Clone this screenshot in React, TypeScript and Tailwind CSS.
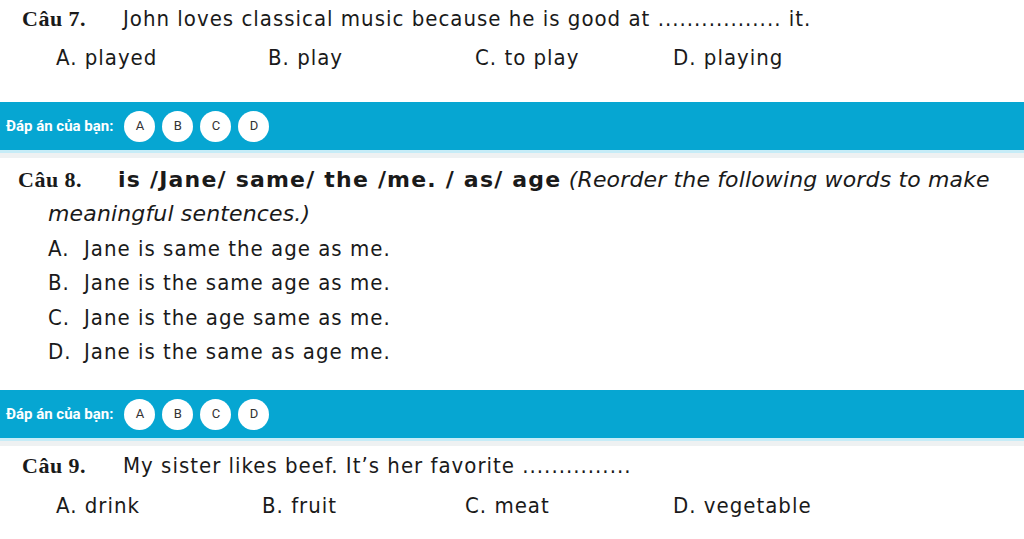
import React from "react";

const body = "font-['DejaVu_Sans_Condensed','DejaVu_Sans',sans-serif] tracking-[1px]";
const serif = "font-['Liberation_Serif',serif] tracking-[0.5px]";

function Bar() {
  return (
    <div>
      <div className="h-[48px] bg-[#06a6d2] flex items-center pl-[6px] gap-[11px] tracking-normal">
        <span className="font-['Roboto',sans-serif] font-bold text-[15px] text-white">
          Đáp án của bạn:
        </span>
        <div className="flex gap-[7px]">
          {["A", "B", "C", "D"].map((l) => (
            <div
              key={l}
              className="w-[31px] h-[31px] rounded-full bg-white flex items-center justify-center font-['Roboto',sans-serif] text-[13px] text-[#333]"
            >
              {l}
            </div>
          ))}
        </div>
      </div>
      <div className="h-[3px] bg-[#c6ecf7]" />
      <div className="h-[5px] bg-[#eef1f2]" />
    </div>
  );
}

export default function App() {
  return (
    <div className={`w-[1024px] h-[539px] bg-white text-[#1a1a1a] overflow-hidden ${body}`}>
      {/* Question 7 */}
      <div className="h-[102px]">
        <div className="flex items-center h-[36px] text-[22px]">
          <span className={`${serif} font-bold text-[22px] ml-[22px] w-[101px]`}>Câu 7.</span>
          <span>John loves classical music because he is good at ................. it.</span>
        </div>
        <div className="flex items-center h-[36px] mt-[3px] text-[22px]">
          <span className="ml-[56px] w-[212px]">A. played</span>
          <span className="w-[207px]">B. play</span>
          <span className="w-[198px]">C. to play</span>
          <span>D. playing</span>
        </div>
      </div>
      <Bar />
      {/* Question 8 */}
      <div className="h-[232px] pt-[5px] text-[22px] leading-[34.4px]">
        <div className="flex">
          <span className={`${serif} font-bold text-[22px] pl-[18px] w-[118px] shrink-0`}>Câu 8.</span>
          <div className="flex-1 pr-[14px]">
            <b className="font-['DejaVu_Sans',sans-serif] tracking-[1.2px]">is /Jane/ same/ the /me. / as/ age</b>{" "}
            <i className="font-['DejaVu_Sans',sans-serif] tracking-[0.15px]">(Reorder the following words to make</i>
          </div>
        </div>
        <div className="pl-[48px]">
          <i className="font-['DejaVu_Sans',sans-serif] tracking-[0.15px]">meaningful sentences.)</i>
        </div>
        {[
          ["A.", "Jane is same the age as me."],
          ["B.", "Jane is the same age as me."],
          ["C.", "Jane is the age same as me."],
          ["D.", "Jane is the same as age me."],
        ].map(([k, t]) => (
          <div key={k} className="flex pl-[48px]">
            <span className="w-[36px]">{k}</span>
            <span>{t}</span>
          </div>
        ))}
      </div>
      <Bar />
      {/* Question 9 */}
      <div className="pt-[1px]">
        <div className="flex items-center h-[36px] text-[22px]">
          <span className={`${serif} font-bold text-[22px] ml-[22px] w-[101px]`}>Câu 9.</span>
          <span>My sister likes beef. It’s her favorite ...............</span>
        </div>
        <div className="flex items-center h-[36px] mt-[4px] text-[22px]">
          <span className="ml-[56px] w-[206px]">A. drink</span>
          <span className="w-[203px]">B. fruit</span>
          <span className="w-[208px]">C. meat</span>
          <span>D. vegetable</span>
        </div>
      </div>
    </div>
  );
}
